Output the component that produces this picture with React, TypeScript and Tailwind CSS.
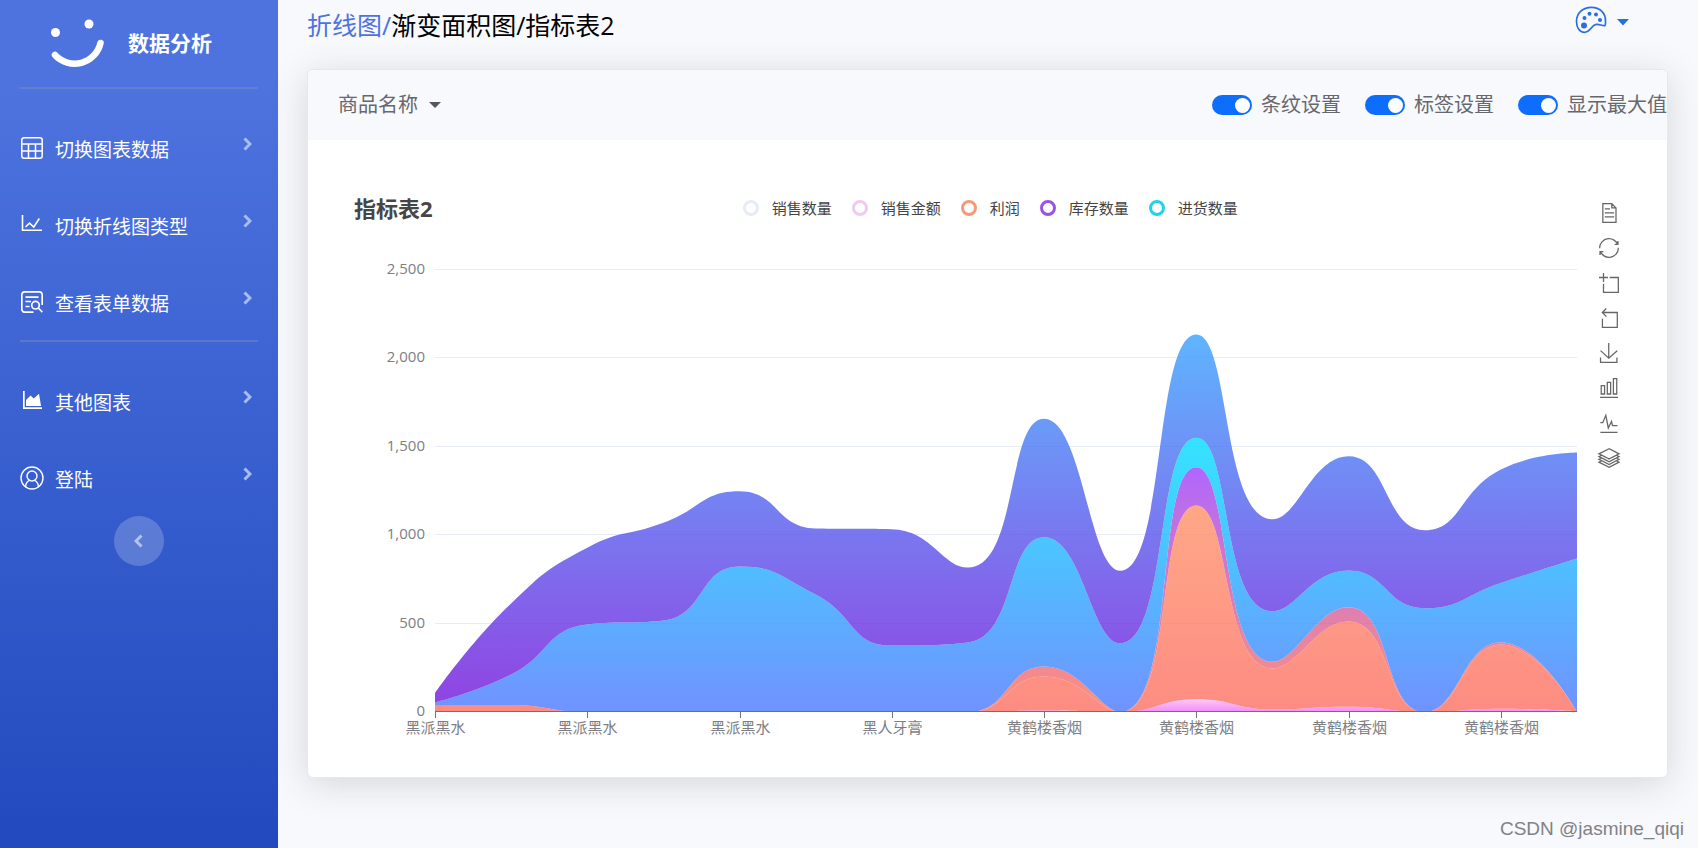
import React, { useState } from 'react';

const WIDTH = 1142;
const HEIGHT = 442;
const MAX_VALUE = 2500;
const LEFT = 63;
const TOP = 15;

type Point = [number, number];

// cumulative values of every stacked series, bottom to top
const ZERO = [0, 0, 0, 0, 0, 0, 0, 0, 0, 0, 0, 0, 0, 0, 0, 0];
const LEVELS = [
  [0, 0, 0, 0, 0, 0, 0, 0, 8, 0, 72, 14, 29, 0, 18, 3],
  [40, 40, 0, 0, 0, 0, 0, 0, 201, 0, 1168, 246, 512, 0, 382, 0],
  [40, 40, 0, 0, 0, 0, 0, 0, 257, 0, 1385, 284, 593, 0, 395, 0],
  [54, 212, 495, 517, 823, 665, 376, 393, 989, 389, 1551, 570, 800, 587, 730, 868],
  [106, 614, 929, 1070, 1249, 1038, 1034, 817, 1658, 799, 2135, 1090, 1447, 1028, 1372, 1468],
];

const BANDS = [
  { id: 'pink', from: '#ffbaf3', to: '#ec70f9' },
  { id: 'orange', from: '#ff9169', to: '#fc6f63' },
  { id: 'violet', from: '#9c40ff', to: '#ff7656' },
  { id: 'cyan', from: '#00ddff', to: '#4d77ff' },
  { id: 'blue', from: '#37a2ff', to: '#7415db' },
];

const X_LABELS = ['黑派黑水', '黑派黑水', '黑派黑水', '黑人牙膏', '黄鹤楼香烟', '黄鹤楼香烟', '黄鹤楼香烟', '黄鹤楼香烟'];
const Y_TICKS = [0, 500, 1000, 1500, 2000, 2500];

const LEGEND = [
  { name: '销售数量', ring: 'border-[#e6ebf8]' },
  { name: '销售金额', ring: 'border-[#efcbee]' },
  { name: '利润', ring: 'border-[#f59a78]' },
  { name: '库存数量', ring: 'border-[#9b51e8]' },
  { name: '进货数量', ring: 'border-[#1fd3ea]' },
];

const TOOLS = [
  { name: '数据视图', d: 'M17.5,17.3H33 M45.4,29.5h-28 M11.5,2v56H51V14.8L38.4,2H11.5z M38.4,2.2v12.7H51 M45.4,41.7h-28' },
  { name: '还原', d: 'M47,18.9h9.8V8.7 M56.3,20.1 C52.1,9,40.5,0.6,26.8,2.1C12.6,3.7,1.6,16.2,2.1,30.6 M13,41.1H3.1v10.2 M3.7,39.9c4.2,11.1,15.8,19.5,29.5,18 c14.2-1.6,25.2-14.1,24.7-28.5' },
  { name: '区域缩放', d: 'M0,13.5h26.9 M13.5,26.9V0 M32.1,13.5H58V58H13.5 V32.1' },
  { name: '区域缩放还原', d: 'M22,1.4L9.9,13.5l12.3,12.3 M10.3,13.5H54.9v44.6 H10.3v-26' },
  { name: '保存为图片', d: 'M4.7,22.9L29.3,45.5L54.7,23.4M4.6,43.6L4.6,58L53.8,58L53.8,43.6M29.2,45.1L29.2,0' },
  { name: '切换为柱状图', d: 'M6.7,22.9h10V48h-10V22.9zM24.9,13h10v35h-10V13zM43.2,2h10v46h-10V2zM3.1,58h53.7' },
  { name: '切换为折线图', d: 'M4.1,28.9h7.1l9.3-22l7.4,38l9.7-19.7l3,12.8h14.9M4.1,58h51.4' },
  { name: '切换为堆叠', d: 'M8.2,38.4l-8.4,4.1l30.6,15.3L60,42.5l-8.1-4.1l-21.5,11L8.2,38.4z M51.9,30l-8.1,4.2l-13.4,6.9l-13.9-6.9L8.2,30l-8.4,4.2l8.4,4.2l22.2,11l21.5-11l8.1-4.2L51.9,30z M51.9,21.7l-8.1,4.2L35.7,30l-5.3,2.8L24.9,30l-8.4-4.1l-8.3-4.2l-8.4,4.2L8.2,30l8.3,4.2l13.9,6.9l13.4-6.9l8.1-4.2l8.1-4.1L51.9,21.7zM30.4,2.2L-0.2,17.5l8.4,4.1l8.3,4.2l8.4,4.2l5.5,2.7l5.3-2.7l8.1-4.2l8.1-4.2l8.1-4.1L30.4,2.2z' },
];

const toPoints = (values: number[]): Point[] =>
  values.map((v, i) => [LEFT + (i * WIDTH) / (values.length - 1), TOP + HEIGHT - (v / MAX_VALUE) * HEIGHT]);

const clamp = (v: number, a: number, b: number) => Math.max(Math.min(v, Math.max(a, b)), Math.min(a, b));

// bezier segments whose control points never overshoot the neighbouring points
const smooth = (pts: Point[]) => {
  let out = '';
  let [c0x, c0y] = pts[0];
  for (let i = 1; i < pts.length; i++) {
    const [px, py] = pts[i - 1];
    const [x, y] = pts[i];
    let c1x = x;
    let c1y = y;
    let nx0 = x;
    let ny0 = y;
    if (i < pts.length - 1) {
      const [nx, ny] = pts[i + 1];
      const prev = Math.hypot(x - px, y - py);
      const next = Math.hypot(nx - x, ny - y);
      const ratio = next / (next + prev);
      nx0 = clamp(x + (nx - px) * 0.5 * ratio, x, nx);
      ny0 = clamp(y + (ny - py) * 0.5 * ratio, y, ny);
      c1x = clamp(x - ((nx0 - x) * prev) / next, px, x);
      c1y = clamp(y - ((ny0 - y) * prev) / next, py, y);
      nx0 = x + ((x - c1x) * next) / prev;
      ny0 = y + ((y - c1y) * next) / prev;
    }
    out += `C${c0x} ${c0y} ${c1x} ${c1y} ${x} ${y}`;
    c0x = nx0;
    c0y = ny0;
  }
  return out;
};

const bandPath = (upper: number[], lower: number[]) => {
  const top = toPoints(upper);
  const bottom = toPoints(lower).reverse();
  return `M${top[0].join(' ')}${smooth(top)}L${bottom[0].join(' ')}${smooth(bottom)}Z`;
};

const AreaChart: React.FC = () => (
  <svg viewBox="0 0 1216 485" className="block w-full h-auto" role="img" aria-label="指标表2">
    <defs>
      {BANDS.map((b) => (
        <linearGradient key={b.id} id={b.id} x1="0" y1="0" x2="0" y2="1">
          <stop offset="0" stopColor={b.from} />
          <stop offset="1" stopColor={b.to} />
        </linearGradient>
      ))}
    </defs>
    {Y_TICKS.map((t) => {
      const y = Math.round(TOP + HEIGHT - (t / MAX_VALUE) * HEIGHT) - 0.5;
      return (
        <g key={t}>
          {t > 0 && <line x1={LEFT} x2={LEFT + WIDTH} y1={y} y2={y} stroke="#e6ebf4" />}
          <text x={53} y={y + 4} textAnchor="end" className="text-[15px] fill-[#7c7e84]">
            {t.toLocaleString('en-US')}
          </text>
        </g>
      );
    })}
    {BANDS.map((b, i) => (
      <path key={b.id} d={bandPath(LEVELS[i], i ? LEVELS[i - 1] : ZERO)} fill={`url(#${b.id})`} opacity="0.8" />
    ))}
    <line x1={LEFT} x2={LEFT + WIDTH} y1={TOP + HEIGHT - 0.5} y2={TOP + HEIGHT - 0.5} stroke="#6e7079" />
    {X_LABELS.map((label, i) => {
      const x = Math.round(LEFT + (i * 2 * WIDTH) / 15) + 0.5;
      return (
        <g key={i}>
          <line x1={x} x2={x} y1={TOP + HEIGHT} y2={TOP + HEIGHT + 6} stroke="#6e7079" />
          <text x={x} y={478} textAnchor="middle" className="text-[15px] fill-[#7c7e84]">
            {label}
          </text>
        </g>
      );
    })}
  </svg>
);

const TableIcon = () => (
  <svg viewBox="0 0 22 22" className="size-[22px]" fill="none" stroke="currentColor" strokeWidth="1.5">
    <rect x="0.8" y="0.8" width="20.4" height="20.4" rx="2.5" />
    <path d="M1 7h20M1 14h20M7.5 7v14M14.5 7v14" />
  </svg>
);

const LineIcon = () => (
  <svg viewBox="0 0 22 22" className="size-[22px]" fill="none" stroke="currentColor" strokeWidth="1.6">
    <path d="M1.5 1v15.2h19.5" />
    <path d="M4.500 13l4-3.800 4.300 3.800 5.500-8.500" />
  </svg>
);

const FormIcon = () => (
  <svg viewBox="0 0 22 22" className="size-[22px]" fill="none" stroke="currentColor" strokeWidth="1.7">
    <path d="M12.5 21.2H3.8a3 3 0 0 1-3-3V3.8a3 3 0 0 1 3-3h14.4a3 3 0 0 1 3 3V14" />
    <path d="M4.5 6.2h13M4.5 10.500h5.500M4.500 15.500h4" />
    <circle cx="14.500" cy="14.200" r="3.800" />
    <path d="M17.300 17l4 4.200" />
  </svg>
);

const AreaIcon = () => (
  <svg viewBox="0 0 22 22" className="size-[22px]" fill="currentColor">
    <path d="M2 1h1.700v16.300H21V19H2z" />
    <path d="M5 16V10l4.500-4.500 3.300 3L18 3.800 20 16z" />
  </svg>
);

const UserIcon = () => (
  <svg viewBox="0 0 24 24" className="size-[24px] -mx-px" fill="none" stroke="currentColor" strokeWidth="1.4">
    <circle cx="12" cy="12" r="11" />
    <circle cx="12" cy="10" r="5" />
    <path d="M5.500 20.500c.5-3.500 2-5.500 4.500-6.300M18.500 20.500c-.5-3.500-2-5.500-4.500-6.300" />
  </svg>
);

const Logo = () => (
  <svg viewBox="0 0 60 54" className="w-[60px] h-[54px]" fill="none">
    <circle cx="9.500" cy="16.500" r="4.500" fill="#fff" />
    <circle cx="43" cy="8" r="4.500" fill="#fff" />
    <path d="M9 39A26.500 26.500 0 0 0 54.500 27" stroke="#fff" strokeWidth="6.500" strokeLinecap="round" />
  </svg>
);

const PaletteIcon = () => (
  <svg viewBox="0 0 32 28" className="w-8 h-7" fill="none">
    <path
      d="M1.500 15.500C1.500 7 8 1.300 16.500 1.300s14 6 14 13.400c0 2.600.3 4.900-.9 5-2.800.3-5.100-1.900-8.400-1.300-5.200 1-5.700 7.900-11.700 7.900-4.800 0-8-4.500-8-10.800z"
      stroke="#2a6fe0"
      strokeWidth="1.700"
    />
    <g fill="#2a6fe0">
      <circle cx="9" cy="19.500" r="3" />
      <circle cx="9.500" cy="12" r="2" />
      <circle cx="14.500" cy="7.800" r="2" />
      <circle cx="21" cy="8.500" r="2" />
      <circle cx="25" cy="14" r="2" />
    </g>
  </svg>
);

interface NavItemProps {
  icon: React.ReactNode;
  label: string;
}

const NavItem: React.FC<NavItemProps> = ({ icon, label }) => (
  <li>
    <a href="#" className="flex items-center h-[77px] pl-[21px] pr-[26px] text-white">
      {icon}
      <span className="ml-3 pt-1 text-[19px] leading-6">{label}</span>
      <svg viewBox="0 0 9 14" className="ml-auto mb-2 w-[9px] h-[14px]" fill="none">
        <path d="M1.500 1.500L7 7l-5.500 5.500" stroke="#a9bbf0" strokeWidth="3" />
      </svg>
    </a>
  </li>
);

const Sidebar: React.FC = () => (
  <aside className="w-[278px] shrink-0 bg-linear-to-b from-[#4e73df] from-10% to-[#224abe]">
    <a href="#" className="flex items-center h-[87px] pl-[46px] pb-[2px] text-white">
      <Logo />
      <span className="ml-[22px] text-[21px] leading-6 font-bold">数据分析</span>
    </a>
    <hr className="mx-5 border-t-2 border-[#8c96b4]/35" />
    <ul className="mt-5">
      <NavItem icon={<TableIcon />} label="切换图表数据" />
      <NavItem icon={<LineIcon />} label="切换折线图类型" />
      <NavItem icon={<FormIcon />} label="查看表单数据" />
    </ul>
    <hr className="mx-5 border-t-2 border-[#8c96b4]/35" />
    <ul className="mt-5">
      <NavItem icon={<AreaIcon />} label="其他图表" />
      <NavItem icon={<UserIcon />} label="登陆" />
    </ul>
    <button aria-label="收起侧边栏" className="flex items-center justify-center mx-auto size-[50px] rounded-full bg-white/20">
      <svg viewBox="0 0 9 14" className="mr-[2px] w-[9px] h-[14px]" fill="none">
        <path d="M7.500 1.500L2 7l5.500 5.500" stroke="#b3c2ee" strokeWidth="3" />
      </svg>
    </button>
  </aside>
);

const Toggle: React.FC<{ id: string; label: string }> = ({ id, label }) => {
  const [on, setOn] = useState(true);

  return (
    <div className="flex items-center gap-[9px] shrink-0">
      <input
        id={id}
        type="checkbox"
        role="switch"
        checked={on}
        onChange={() => setOn(!on)}
        className="flex items-center justify-start checked:justify-end appearance-none w-10 h-5 px-[2px] rounded-full bg-gray-300 checked:bg-[#0d6efd] before:block before:size-[15px] before:rounded-full before:bg-white cursor-pointer"
      />
      <label htmlFor={id} className="text-[20px] leading-6 text-[#66686e] whitespace-nowrap">
        {label}
      </label>
    </div>
  );
};

const App: React.FC = () => {
  return (
    <div className="flex min-h-screen bg-[#f8f9fc] font-['Open_Sans','Noto_Sans_CJK_SC',sans-serif]">
      <Sidebar />
      <div className="flex flex-col flex-1 min-w-0">
        <header className="flex items-start justify-between h-[69px] pl-[29px] pr-[69px]">
          <h1 className="pt-[9px] text-[25px] leading-8 text-black">
            <a href="#" className="text-[#4e73df]">折线图/</a>渐变面积图/指标表2
          </h1>
          <button aria-label="主题颜色" className="flex items-center gap-[10px] pt-[6px] cursor-pointer">
            <PaletteIcon />
            <svg viewBox="0 0 12 7" className="w-3 h-[7px] mt-1" fill="#1f74dc">
              <path d="M0 0h12L6 6.500z" />
            </svg>
          </button>
        </header>

        <main className="ml-[29px] mr-[30px] rounded-md border border-[#e6e8ee] bg-white shadow-[0_6px_36px_rgba(58,59,69,0.18)]">
          <div className="flex items-center justify-between h-[70px] pl-[30px] rounded-t-md bg-[#f8f9fc]">
            <button className="flex items-center gap-[11px] text-[20px] leading-6 text-[#66686e] cursor-pointer">
              商品名称
              <svg viewBox="0 0 12 6" className="w-3 h-[6px]" fill="#55575d">
                <path d="M0 0h12L6 6z" />
              </svg>
            </button>
            <div className="flex items-center gap-6">
              <Toggle id="stripe" label="条纹设置" />
              <Toggle id="labels" label="标签设置" />
              <Toggle id="max" label="显示最大值" />
            </div>
          </div>

          <div className="flex pt-[52px] pb-[37px]">
            <div className="flex-1 min-w-0">
              <div className="flex items-center h-8 pl-[46px] pr-[40px]">
                <h2 className="text-[22px] leading-8 font-bold text-[#464646]">指标表2</h2>
                <ul className="flex flex-1 items-center justify-center gap-5">
                  {LEGEND.map((item) => (
                    <li key={item.name} className="flex items-center gap-[13px] text-[15px] leading-5 text-[#444]">
                      <span className={`size-4 rounded-full border-[3px] ${item.ring}`} />
                      {item.name}
                    </li>
                  ))}
                </ul>
              </div>
              <div className="mt-[31px] pl-16">
                <AreaChart />
              </div>
            </div>
            <div className="flex flex-col gap-[15px] pt-[11px] ml-[11px] mr-12">
              {TOOLS.map((tool) => (
                <button key={tool.name} aria-label={tool.name} className="size-5 cursor-pointer">
                  <svg viewBox="0 0 60 60" className="size-5 overflow-visible" fill="none" stroke="#666" strokeWidth="3.800">
                    <path d={tool.d} />
                  </svg>
                </button>
              ))}
            </div>
          </div>
        </main>

        <footer className="mt-auto pt-4 pb-[7px] pr-[14px] text-right font-['Liberation_Sans',sans-serif] text-[19px] leading-6 text-[#808287]">
          CSDN @jasmine_qiqi
        </footer>
      </div>
    </div>
  );
};

export default App;
